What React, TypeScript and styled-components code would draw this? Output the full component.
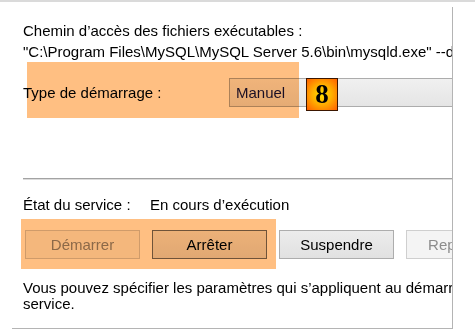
import React from "react";
import styled, { createGlobalStyle } from "styled-components";

const font = `"Liberation Sans", Arial, sans-serif`;
const marker = "#ffbf82";

const Global = createGlobalStyle`
  html, body {
    margin: 0;
    padding: 0;
    background: #ffffff;
  }
  body {
    font-family: ${font};
    font-size: 15px;
    color: #000;
  }
`;

const Frame = styled.div`
  width: 475px;
  height: 335px;
  box-sizing: border-box;
  border-top: 2px solid #dadada;
  overflow: hidden;
  background: #ffffff;
  isolation: isolate;
`;

const Panel = styled.div`
  margin: 5px 0 0 12px;
  width: 441px;
  height: 322px;
  box-sizing: border-box;
  border-right: 1px solid #b4b4b4;
  border-bottom: 1px solid #b4b4b4;
  padding: 13px 0 0 11px;
  overflow: hidden;
  display: flex;
  flex-direction: column;
`;

const Line = styled.div`
  line-height: 21px;
  white-space: nowrap;
`;

const StartRow = styled.div`
  position: relative;
  display: flex;
  align-items: center;
  height: 29px;
  margin-top: 16px;
  white-space: nowrap;
`;

const Label = styled.span<{ $w: number }>`
  width: ${(p) => p.$w}px;
  flex: none;
`;

const Combo = styled.div`
  flex: none;
  width: 260px;
  height: 29px;
  box-sizing: border-box;
  border: 1px solid #acacac;
  background: linear-gradient(#f0f0f0, #e5e5e5);
  display: flex;
  align-items: center;
  padding-left: 6px;
  color: #1b1446;
`;

const Marker = styled.div<{ $l: number; $t: number; $w: number; $h: number }>`
  position: absolute;
  left: ${(p) => p.$l}px;
  top: ${(p) => p.$t}px;
  width: ${(p) => p.$w}px;
  height: ${(p) => p.$h}px;
  background: ${marker};
  mix-blend-mode: multiply;
  pointer-events: none;
`;

const Badge = styled.div`
  position: absolute;
  left: 283px;
  top: 0;
  width: 32px;
  height: 33px;
  box-sizing: border-box;
  border: 1px solid #3b1600;
  background: radial-gradient(circle at 50% 50%, #ffe000 0%, #ffb000 45%, #ff6000 100%);
  display: flex;
  align-items: center;
  justify-content: center;
  font-family: "Liberation Serif", "Times New Roman", serif;
  font-weight: bold;
  font-size: 27px;
  color: #000;
`;

const Separator = styled.div`
  margin-top: 71px;
  height: 2px;
  background: linear-gradient(#a3a3a3 50%, #dcdcdc 50%);
`;

const StatusRow = styled.div`
  display: flex;
  line-height: 21px;
  margin-top: 14px;
  white-space: nowrap;
`;

const ButtonRow = styled.div`
  position: relative;
  display: flex;
  gap: 12px;
  margin: 15px 0 0 2px;
  height: 29px;
`;

const Button = styled.div<{ $state?: "disabled" | "default" }>`
  flex: none;
  width: 115px;
  height: 29px;
  box-sizing: border-box;
  display: flex;
  align-items: center;
  justify-content: center;
  border: 1px solid
    ${(p) =>
      p.$state === "disabled" ? "#cfcfcf" : p.$state === "default" ? "#6f6f6f" : "#adadad"};
  background: ${(p) =>
    p.$state === "disabled" ? "#f4f4f4" : "linear-gradient(#ececec, #e1e1e1)"};
  color: ${(p) => (p.$state === "disabled" ? "#8c8c8c" : "#000")};
`;

const Para = styled.div`
  margin-top: 21px;
  line-height: 16px;
  white-space: nowrap;
`;

export default function App() {
  return (
    <>
      <Global />
      <Frame>
        <Panel>
          <Line>Chemin d’accès des fichiers exécutables :</Line>
          <Line>"C:\Program Files\MySQL\MySQL Server 5.6\bin\mysqld.exe" --defaults-file</Line>
          <StartRow>
            <Label $w={206}>Type de démarrage :</Label>
            <Combo>Manuel</Combo>
            <Marker $l={4} $t={-16} $w={272} $h={56} />
            <Badge>8</Badge>
          </StartRow>
          <Separator />
          <StatusRow>
            <Label $w={127}>État du service :</Label>
            <span>En cours d’exécution</span>
          </StatusRow>
          <ButtonRow>
            <Button $state="disabled">Démarrer</Button>
            <Button $state="default">Arrêter</Button>
            <Button>Suspendre</Button>
            <Button $state="disabled">Reprendre</Button>
            <Marker $l={-4} $t={-11} $w={255} $h={50} />
          </ButtonRow>
          <Para>
            Vous pouvez spécifier les paramètres qui s’appliquent au démarrage du
            <br />
            service.
          </Para>
        </Panel>
      </Frame>
    </>
  );
}
